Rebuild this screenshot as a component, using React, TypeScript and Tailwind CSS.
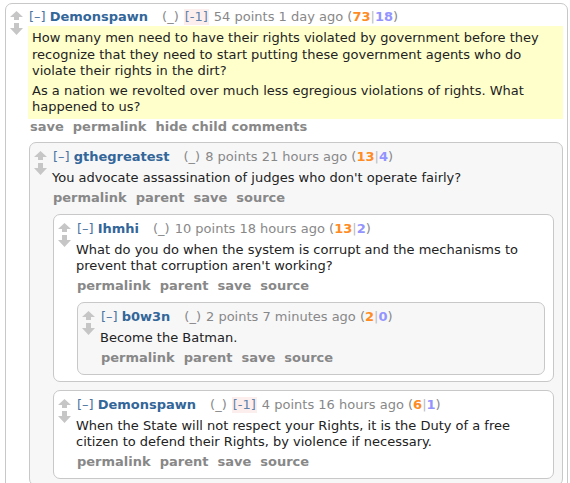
import React from 'react';

interface CommentData {
  author: string;
  minus?: boolean;
  points: string;
  time: string;
  up: number;
  down: number;
  body: string[];
  actions: string[];
  highlight?: boolean;
  children?: CommentData[];
}

const thread: CommentData = {
  author: 'Demonspawn',
  minus: true,
  points: '54 points',
  time: '1 day ago',
  up: 73,
  down: 18,
  highlight: true,
  body: [
    'How many men need to have their rights violated by government before they recognize that they need to start putting these government agents who do violate their rights in the dirt?',
    'As a nation we revolted over much less egregious violations of rights. What happened to us?',
  ],
  actions: ['save', 'permalink', 'hide child comments'],
  children: [
    {
      author: 'gthegreatest',
      points: '8 points',
      time: '21 hours ago',
      up: 13,
      down: 4,
      body: ["You advocate assassination of judges who don't operate fairly?"],
      actions: ['permalink', 'parent', 'save', 'source'],
      children: [
        {
          author: 'Ihmhi',
          points: '10 points',
          time: '18 hours ago',
          up: 13,
          down: 2,
          body: ["What do you do when the system is corrupt and the mechanisms to prevent that corruption aren't working?"],
          actions: ['permalink', 'parent', 'save', 'source'],
          children: [
            {
              author: 'b0w3n',
              points: '2 points',
              time: '7 minutes ago',
              up: 2,
              down: 0,
              body: ['Become the Batman.'],
              actions: ['permalink', 'parent', 'save', 'source'],
            },
          ],
        },
        {
          author: 'Demonspawn',
          minus: true,
          points: '4 points',
          time: '16 hours ago',
          up: 6,
          down: 1,
          body: ['When the State will not respect your Rights, it is the Duty of a free citizen to defend their Rights, by violence if necessary.'],
          actions: ['permalink', 'parent', 'save', 'source'],
        },
      ],
    },
  ],
};

const Arrows = () => (
  <div className="flex w-[13px] shrink-0 flex-col items-center pt-[2px]">
    <svg width="13" height="9" viewBox="0 0 13 9">
      <path d="M6.5 0 L13 6 L9 6 L9 9 L4 9 L4 6 L0 6 Z" fill="#c6c6c6" />
    </svg>
    <svg width="13" height="12" viewBox="0 0 13 12" className="mt-[3px]">
      <path d="M4 0 L9 0 L9 5 L13 5 L6.5 12 L0 5 L4 5 Z" fill="#c6c6c6" />
    </svg>
  </div>
);

const Header = ({ c }: { c: CommentData }) => (
  <div className="flex items-baseline whitespace-nowrap pl-[1px] text-[13px] leading-[16px]">
    <span className="text-[#4b74a0]">[–]</span>
    <span className="ml-[4px] font-bold text-[#369]">{c.author}</span>
    <span className="ml-[14px] text-[#888]">(_)</span>
    {c.minus && <span className="ml-[5px] bg-[#fdeeee] px-[1px] text-[#5f83aa]">[-1]</span>}
    <span className="ml-[5px] text-[#888]">
      {c.points} {c.time} (
      <span className="font-bold text-[#ff8b24]">{c.up}</span>
      <span className="text-[#bbb]">|</span>
      <span className="font-bold text-[#9494ff]">{c.down}</span>)
    </span>
  </div>
);

const Actions = ({ items }: { items: string[] }) => (
  <div className="flex gap-[9px] pl-[1px] text-[13px] font-bold leading-[16px] text-[#888]">
    {items.map((a) => (
      <span key={a} className="cursor-pointer hover:underline">
        {a}
      </span>
    ))}
  </div>
);

const Comment = ({ c, depth }: { c: CommentData; depth: number }) => {
  return (
    <div
      className={`flex rounded-[7px] border border-[#c8c8c8] pb-[6px] pl-[4px] ${
        depth % 2 === 1 ? 'bg-[#f7f7f8]' : 'bg-white'
      } ${depth === 0 ? 'pr-[4px] pt-[5px]' : 'pr-[8px] pt-[6px]'}`}
    >
      <Arrows />
      <div className="ml-[5px] min-w-0 flex-1">
        <Header c={c} />
        {c.highlight ? (
          <div className="mt-[1px] bg-[#ffffcc] pb-[3px] pl-[4px] pr-[4px] pt-[4px] text-[13px] leading-[16.5px] text-[#222]">
            {c.body.map((p, i) => (
              <p key={i} className={i > 0 ? 'mt-[3px]' : ''}>
                {p}
              </p>
            ))}
          </div>
        ) : (
          <div className="mt-[5px] text-[13px] leading-[16px] text-[#222]">
            {c.body.map((p, i) => (
              <p key={i}>{p}</p>
            ))}
          </div>
        )}
        <div className={`mb-[2px] ${c.highlight ? 'ml-[1px]' : 'mt-[4px]'}`}>
          <Actions items={c.actions} />
        </div>
        {c.children && (
          <div className={`ml-[1px] flex flex-col gap-[8px] ${depth === 0 ? 'mt-[7px]' : 'mt-[8px]'}`}>
            {c.children.map((ch, i) => (
              <Comment key={i} c={ch} depth={depth + 1} />
            ))}
          </div>
        )}
      </div>
    </div>
  );
};

export default function App() {
  return (
    <div className="h-[483px] w-[570px] overflow-hidden bg-white pl-[5px] pt-[3px] font-['DejaVu_Sans',Verdana,sans-serif]">
      <div className="w-[563px]">
        <Comment c={thread} depth={0} />
      </div>
    </div>
  );
}
